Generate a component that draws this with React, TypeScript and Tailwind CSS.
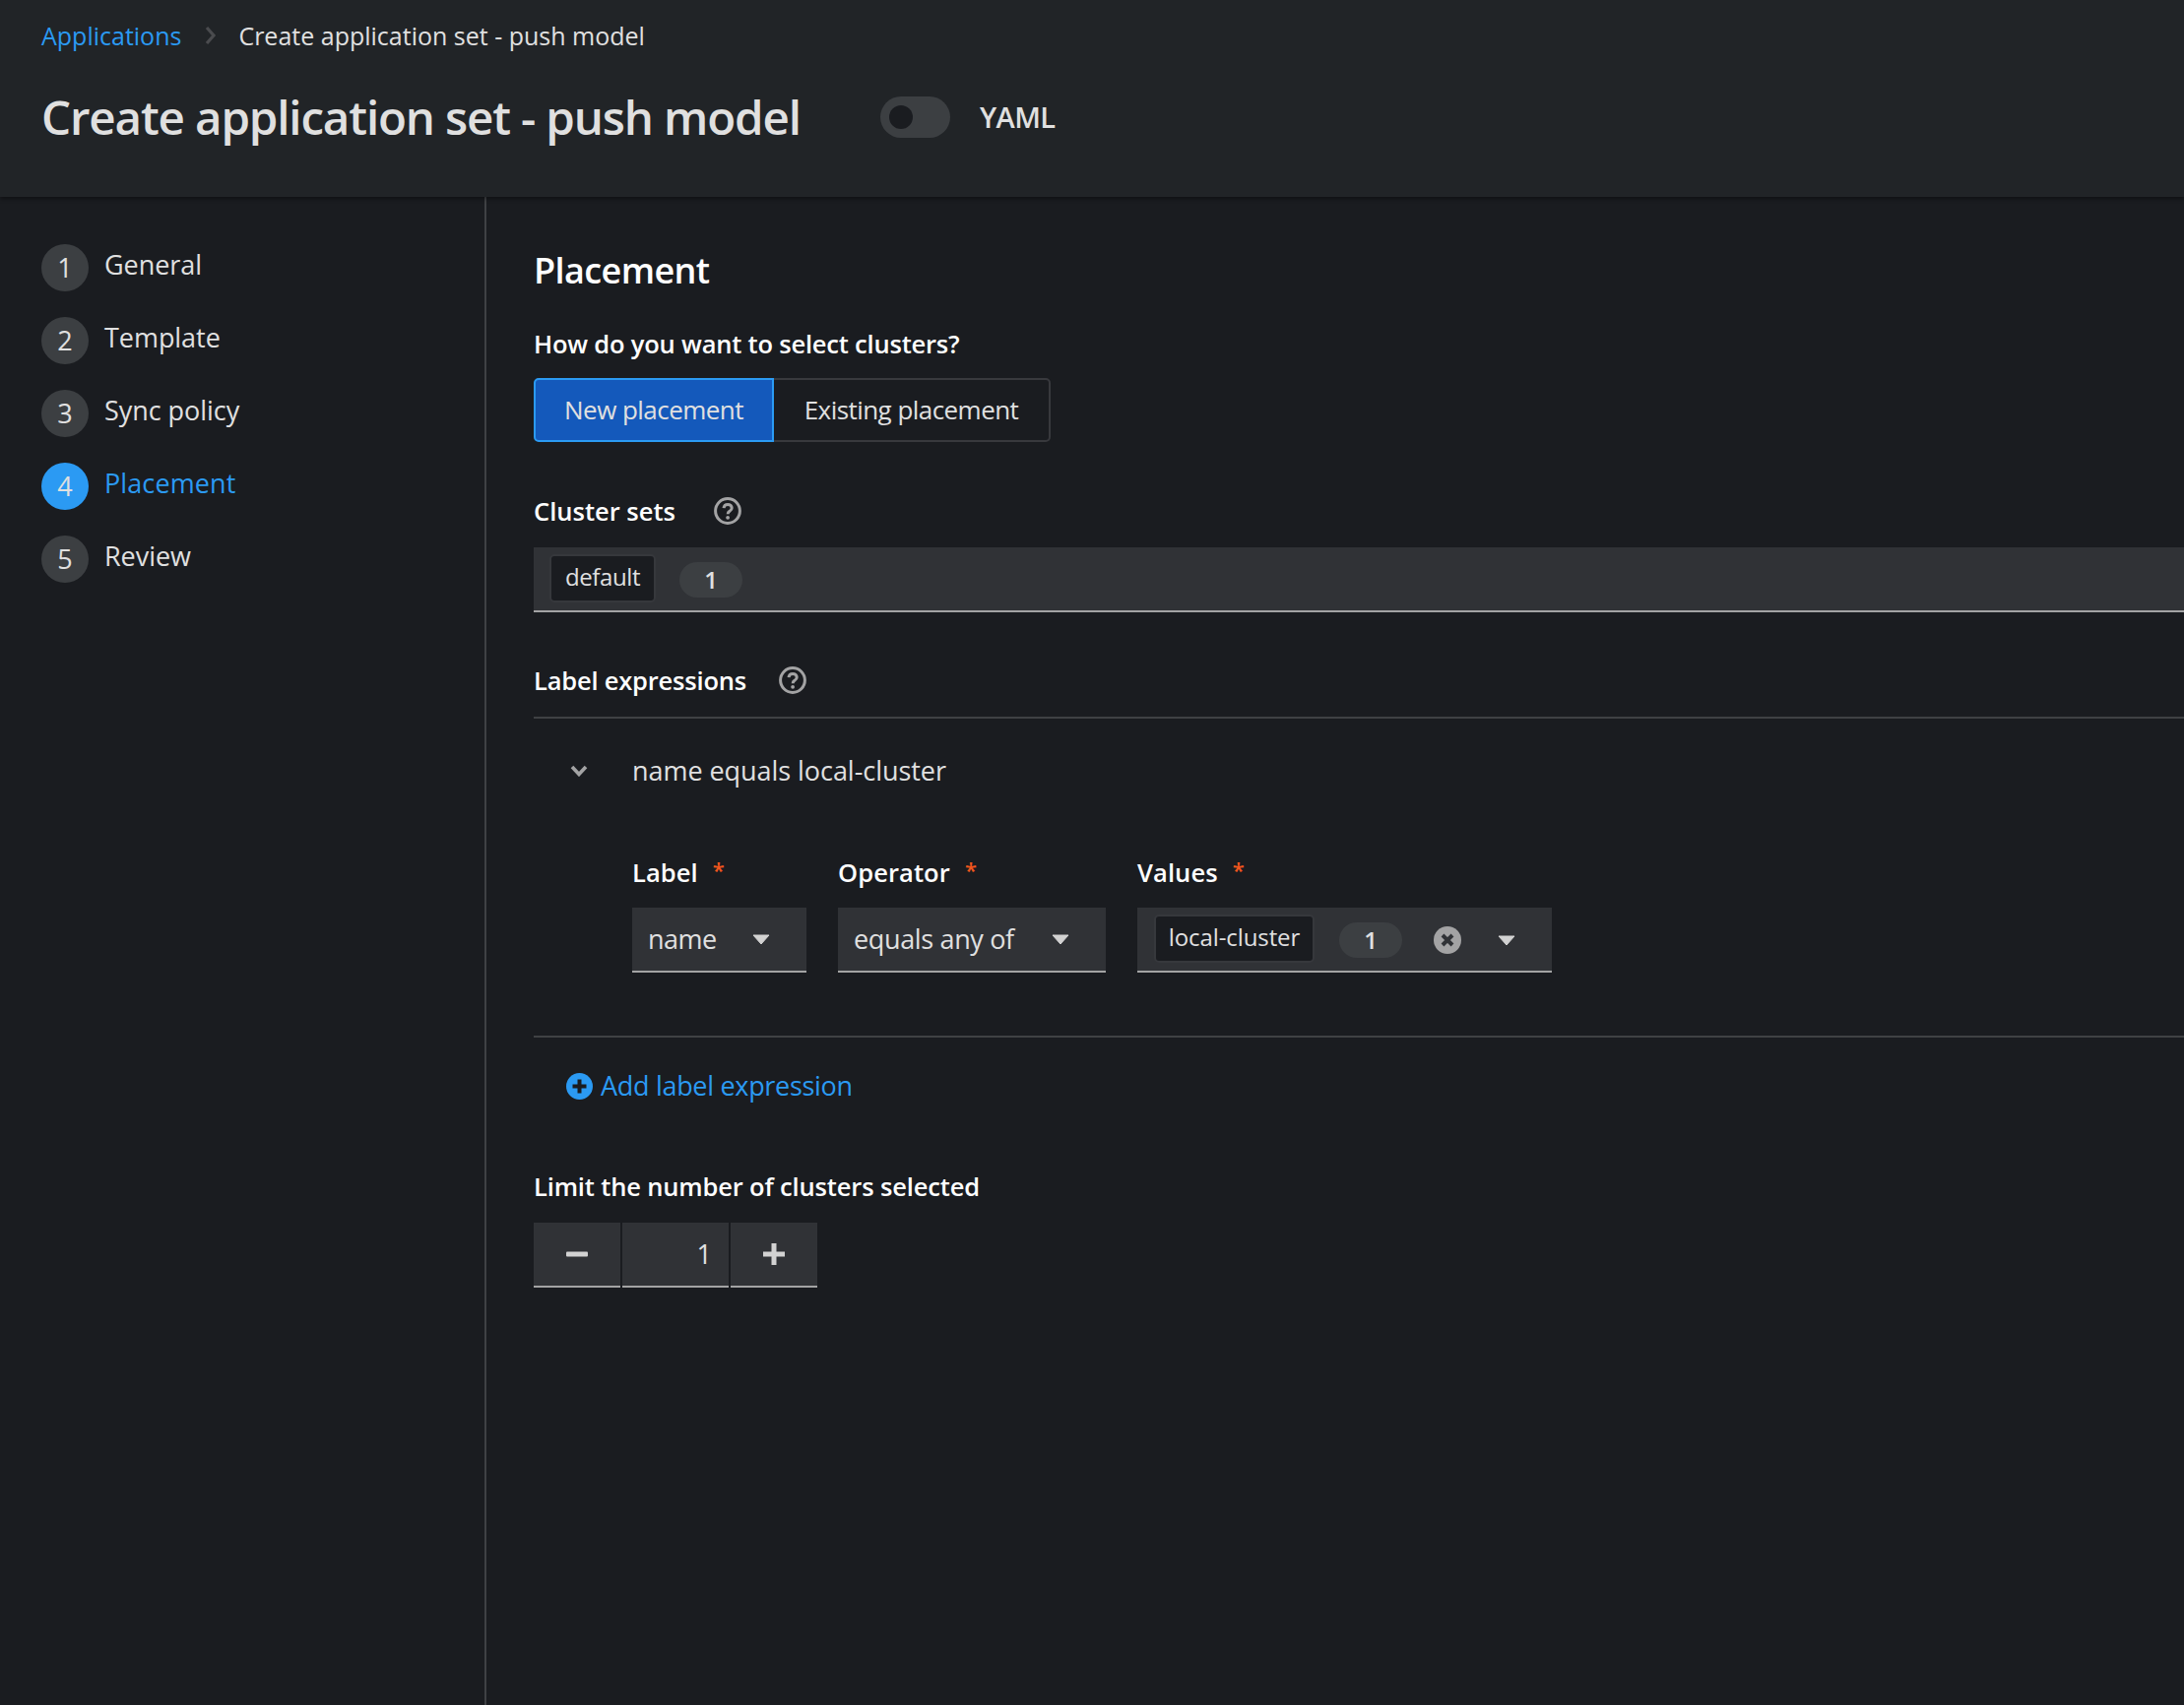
import React from "react";

const font = "font-['Open_Sans','Liberation_Sans',sans-serif]";

function Caret() {
  return (
    <svg width="18" height="11" viewBox="0 0 18 11" className="shrink-0">
      <path d="M1 1 H17 L9 10 Z" fill="#d2d2d2" stroke="#d2d2d2" strokeLinejoin="round" />
    </svg>
  );
}

function Help() {
  return (
    <svg width="28" height="28" viewBox="0 0 28 28" className="shrink-0">
      <circle cx="14" cy="14" r="12.4" fill="none" stroke="#a3a3a4" strokeWidth="3" />
      <path d="M10 11.2 C10.2 8.8 12 7.4 14.1 7.4 C16.5 7.4 18.2 8.9 18.2 11 C18.2 12.8 17 13.5 15.9 14.3 C14.9 15 14.2 15.6 14.2 17.2" fill="none" stroke="#a3a3a4" strokeWidth="3" />
      <circle cx="14.1" cy="20.8" r="1.9" fill="#a3a3a4" />
    </svg>
  );
}

function Req({ children }: { children: string }) {
  return (
    <div className="flex items-start gap-[15px] h-[32px] text-[25.5px] leading-[32px] font-semibold text-white tracking-[0.1px]">
      <span>{children}</span>
      <span className="text-[#f0561d] text-[22px] leading-[26px]">*</span>
    </div>
  );
}

const steps = ["General", "Template", "Sync policy", "Placement", "Review"];

export default function App() {
  return (
    <div className={`w-[2218px] h-[1732px] overflow-hidden bg-[#1a1c20] text-[#e0e0e0] flex flex-col ${font}`}>
      <header className="h-[200px] shrink-0 bg-[#212427] pl-[42px] shadow-[0_2px_4px_rgba(0,0,0,0.4)] relative z-10">
        <nav className="flex items-center h-[34px] mt-[19px] text-[25px] leading-[34px]">
          <span className="text-[#2b9af3]">Applications</span>
          <svg width="14" height="20" viewBox="0 0 14 20" className="ml-[23px] mr-[21px]">
            <path d="M3 2 L10 10 L3 18" fill="none" stroke="#4a4b4e" strokeWidth="3.2" />
          </svg>
          <span>Create application set - push model</span>
        </nav>
        <div className="flex items-center h-[60px] mt-[36px]">
          <h1 className="text-[47.5px] leading-[60px] font-semibold tracking-[-1.15px] w-[852px] shrink-0">Create application set - push model</h1>
          <span className="relative w-[71px] h-[42px] rounded-full bg-[#3c3f42] shrink-0">
            <span className="absolute left-[9px] top-[9px] w-[24px] h-[24px] rounded-full bg-[#1a1c20]" />
          </span>
          <span className="ml-[30px] text-[29px] font-semibold tracking-[-0.6px]">YAML</span>
        </div>
      </header>

      <div className="flex flex-1 min-h-0">
        <aside className="w-[494px] shrink-0 border-r-2 border-[#3f4144] pt-[48px] pl-[42px]">
          <ul className="flex flex-col gap-[26px]">
            {steps.map((s, i) => {
              const active = i === 3;
              return (
                <li key={s} className="flex h-[48px] gap-[16px]">
                  <span className={`w-[48px] h-[48px] rounded-full flex items-center justify-center text-[27px] ${active ? "bg-[#2b9af3]" : "bg-[#3c3f42]"}`}>{i + 1}</span>
                  <span className={`text-[27px] leading-[34px] mt-[4px] ${active ? "text-[#2b9af3] tracking-[0.1px]" : "tracking-[-0.05px]"}`}>{s}</span>
                </li>
              );
            })}
          </ul>
        </aside>

        <main className="flex-1 min-w-0 pl-[48px] pt-[53px]">
          <h2 className="text-[36px] leading-[44px] font-semibold text-white tracking-[-0.6px]">Placement</h2>
          <div className="mt-[35px] h-[34px] text-[25.5px] leading-[34px] font-semibold text-white tracking-[-0.2px]">How do you want to select clusters?</div>

          <div className="mt-[18px] flex w-[525px] h-[65px] text-[26px] tracking-[-0.55px]">
            <button className="w-[244px] h-full rounded-l-[5px] bg-[#1459bb] border-2 border-[#2b9af3] text-[#e0e0e0]">New placement</button>
            <button className="flex-1 h-full rounded-r-[5px] border-2 border-l-0 border-[#38393d] text-[#e0e0e0]">Existing placement</button>
          </div>

          <div className="mt-[53px] flex items-center h-[34px]">
            <span className="text-[25.5px] leading-[34px] font-semibold text-white w-[183px]">Cluster sets</span>
            <Help />
          </div>

          <div className="mt-[20px] h-[66px] bg-[#303236] border-b-2 border-[#a3a3a4] flex items-start pl-[16px] pt-[7px]">
            <span className="h-[49px] w-[108px] bg-[#1a1c20] border-2 border-[#36383c] rounded-[5px] flex items-center justify-center pb-[3px] text-[24px] tracking-[-0.4px]">default</span>
            <span className="ml-[24px] mt-[8px] h-[36px] w-[64px] rounded-full bg-[#3c3f42] flex items-center justify-center text-[24px] font-semibold">1</span>
          </div>

          <div className="mt-[52px] flex items-center h-[34px]">
            <span className="text-[25.5px] leading-[34px] font-semibold text-white tracking-[-0.2px] w-[249px]">Label expressions</span>
            <Help />
          </div>

          <div className="mt-[20px] border-t-2 border-[#3f4144] border-b-2 h-[326px] flex flex-col">
            <div className="flex items-center h-[34px] mt-[36px] pl-[37px]">
              <svg width="18" height="12" viewBox="0 0 18 12" className="mr-[45px]">
                <path d="M2 2 L9 9.5 L16 2" fill="none" stroke="#a3a3a4" strokeWidth="3.6" />
              </svg>
              <span className="text-[27px] leading-[34px] tracking-[-0.05px]">name equals local-cluster</span>
            </div>

            <div className="mt-[70px] pl-[100px] flex gap-[32px]">
              <div className="w-[177px]">
                <Req>Label</Req>
                <div className="mt-[20px] h-[66px] bg-[#303236] border-b-2 border-[#a3a3a4] flex items-center pl-[16px] text-[27px] tracking-[-0.5px]">
                  <span className="w-[106px]">name</span>
                  <Caret />
                </div>
              </div>
              <div className="w-[272px]">
                <Req>Operator</Req>
                <div className="mt-[20px] h-[66px] bg-[#303236] border-b-2 border-[#a3a3a4] flex items-center pl-[16px] text-[27px] tracking-[-0.35px]">
                  <span className="w-[201px]">equals any of</span>
                  <Caret />
                </div>
              </div>
              <div className="w-[421px]">
                <Req>Values</Req>
                <div className="mt-[20px] h-[66px] bg-[#303236] border-b-2 border-[#a3a3a4] flex items-start pl-[17px] pt-[7px]">
                  <span className="h-[49px] w-[163px] bg-[#1a1c20] border-2 border-[#36383c] rounded-[5px] flex items-center justify-center pb-[3px] text-[24px] tracking-[-0.1px] shrink-0">local-cluster</span>
                  <span className="ml-[25px] mt-[8px] h-[36px] w-[64px] rounded-full bg-[#3c3f42] flex items-center justify-center text-[24px] font-semibold shrink-0">1</span>
                  <svg width="28" height="28" viewBox="0 0 28 28" className="ml-[32px] mt-[12px] shrink-0">
                    <circle cx="14" cy="14" r="14" fill="#a3a3a4" />
                    <path d="M9 9 L19 19 M19 9 L9 19" stroke="#303236" strokeWidth="4" />
                  </svg>
                  <span className="ml-[37px] mt-[21px]"><Caret /></span>
                </div>
              </div>
            </div>
          </div>

          <div className="mt-[35px] pl-[33px] flex items-center h-[28px] gap-[8px] text-[#2b9af3]">
            <svg width="27" height="27" viewBox="0 0 27 27" className="shrink-0">
              <circle cx="13.5" cy="13.5" r="13.5" fill="#2b9af3" />
              <path d="M13.5 6.5 V20.5 M6.5 13.5 H20.5" stroke="#1a1c20" strokeWidth="4" />
            </svg>
            <span className="text-[27px] leading-[34px] tracking-[-0.3px]">Add label expression</span>
          </div>

          <div className="mt-[71px] h-[34px] text-[25.5px] leading-[34px] font-semibold text-white tracking-[-0.15px]">Limit the number of clusters selected</div>

          <div className="mt-[20px] flex gap-[2px] h-[66px]">
            <div className="w-[88px] bg-[#303236] border-b-2 border-[#a3a3a4] flex items-center justify-center">
              <svg width="22" height="6" viewBox="0 0 22 6"><rect width="22" height="5" y="0.5" rx="1" fill="#d2d2d2" /></svg>
            </div>
            <div className="w-[108px] bg-[#303236] border-b-2 border-[#a3a3a4] flex items-center justify-end pr-[17px] text-[27px]">1</div>
            <div className="w-[88px] bg-[#303236] border-b-2 border-[#a3a3a4] flex items-center justify-center">
              <svg width="22" height="22" viewBox="0 0 22 22"><path d="M11 0 V22 M0 11 H22" stroke="#d2d2d2" strokeWidth="5" /></svg>
            </div>
          </div>
        </main>
      </div>
    </div>
  );
}
